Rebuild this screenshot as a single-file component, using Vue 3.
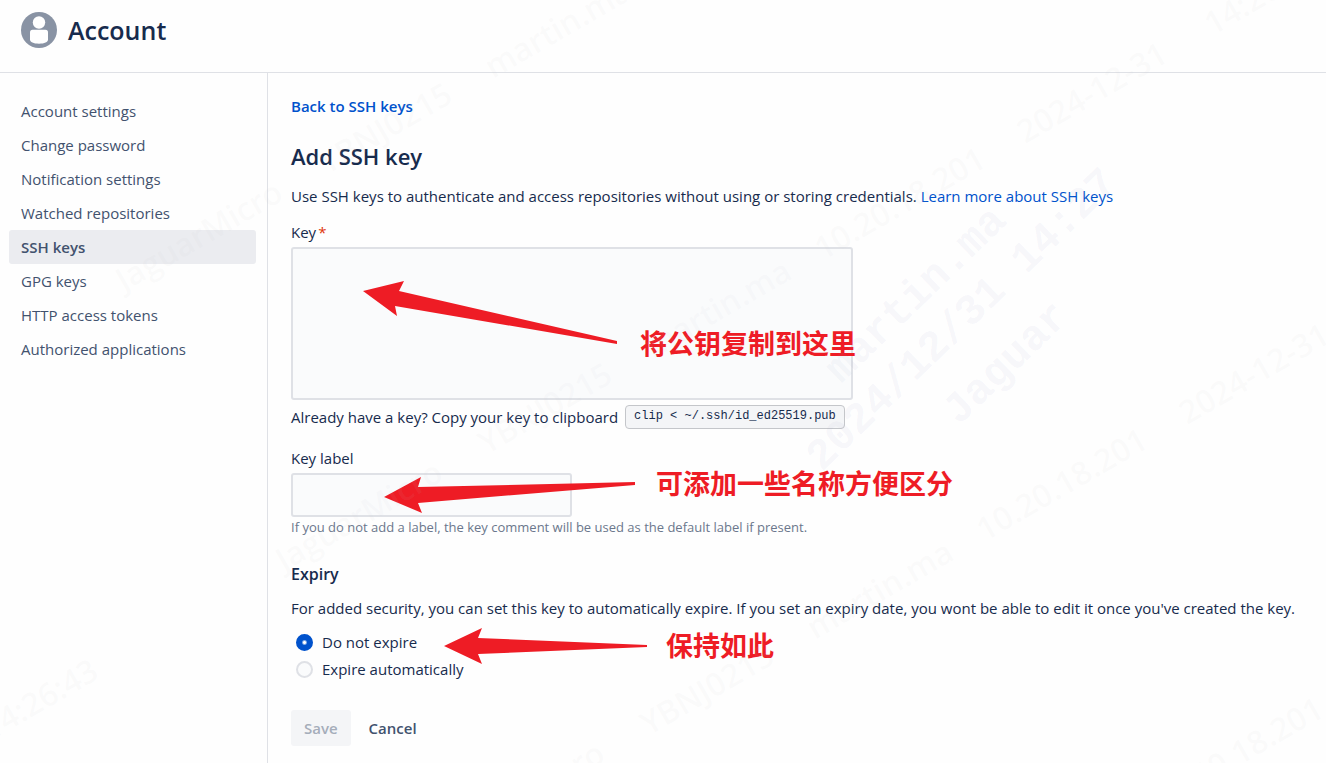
<script setup>
import { ref } from 'vue'

const navItems = [
  'Account settings',
  'Change password',
  'Notification settings',
  'Watched repositories',
  'SSH keys',
  'GPG keys',
  'HTTP access tokens',
  'Authorized applications',
]
const active = 'SSH keys'

const key = ref('')
const label = ref('')
const expiry = ref('never')

const stamp = [
  { text: 'JaguarMicro', at: 0 },
  { text: 'YBNJ0215', at: 234 },
  { text: 'martin.ma', at: 426 },
  { text: '10.20.18.201', at: 622 },
  { text: '2024-12-31', at: 856 },
  { text: '14:26:43', at: 1072 },
]
const stampRows = [
  { x: -938, y: 1277, parts: stamp.slice(5) },
  { x: 124, y: 292, parts: stamp.slice(0, 3) },
  { x: 284, y: 572, parts: stamp },
  { x: 446, y: 853, parts: stamp.slice(0, 5) },
  { x: 622, y: 1122, parts: stamp.slice(3, 4) },
]
</script>

<template>
  <div class="page">
    <header class="header">
      <svg class="avatar" viewBox="0 0 36 36" aria-hidden="true">
        <circle cx="18" cy="18" r="18" fill="#8993a4" />
        <circle cx="18" cy="10.500" r="6.200" fill="#fff" />
        <path d="M11.500 17.800h13a2.500 2.500 0 0 1 2.500 2.500V27.500c0 2.500-3.500 4.200-9 4.200S9 30 9 27.500v-7.200a2.500 2.500 0 0 1 2.500-2.500z" fill="#fff" />
      </svg>
      <h1>Account</h1>
    </header>

    <div class="body">
      <nav class="sidebar">
        <a
          v-for="item in navItems"
          :key="item"
          href="#"
          class="nav-item"
          :class="{ active: item === active }"
        >{{ item }}</a>
      </nav>

      <main class="content">
        <a href="#" class="back">Back to SSH keys</a>
        <h2>Add SSH key</h2>
        <p class="intro">
          Use SSH keys to authenticate and access repositories without using or storing credentials.
          <a href="#">Learn more about SSH keys</a>
        </p>

        <form @submit.prevent>
          <div class="field">
            <label for="key">Key<span class="required">*</span></label>
            <textarea id="key" v-model="key"></textarea>
            <div class="note note-key">
              <svg width="256" height="66" viewBox="0 0 256 66" aria-hidden="true">
                <path d="M0 11L41 1L36 11L254 61V64L32 26L34 36Z" />
              </svg>
              <span>将公钥复制到这里</span>
            </div>
          </div>
          <p class="clipboard">
            Already have a key? Copy your key to clipboard
            <code>clip &lt; ~/.ssh/id_ed25519.pub</code>
          </p>

          <div class="field field-label">
            <label for="label">Key label</label>
            <input id="label" v-model="label" type="text" />
            <div class="note note-label">
              <svg width="252" height="38" viewBox="0 0 252 38" aria-hidden="true">
                <path d="M0 21L37 1L34 11L251 6V9L34 27L38 37Z" />
              </svg>
              <span>可添加一些名称方便区分</span>
            </div>
          </div>
          <p class="hint">If you do not add a label, the key comment will be used as the default label if present.</p>

          <fieldset>
            <legend>Expiry</legend>
            <p class="expiry-text">
              For added security, you can set this key to automatically expire. If you set an expiry date, you wont be able to edit it once you've created the key.
            </p>
            <div class="radios">
              <label class="radio">
                <input v-model="expiry" type="radio" name="expiry" value="never" />
                Do not expire
              </label>
              <label class="radio">
                <input v-model="expiry" type="radio" name="expiry" value="auto" />
                Expire automatically
              </label>
              <div class="note note-expiry">
                <svg width="205" height="36" viewBox="0 0 205 36" aria-hidden="true">
                  <path d="M0 18L38 0L34 10L203 17V19L34 26L38 36Z" />
                </svg>
                <span>保持如此</span>
              </div>
            </div>
          </fieldset>

          <div class="actions">
            <button type="submit" class="save" disabled>Save</button>
            <button type="button" class="cancel">Cancel</button>
          </div>
        </form>
      </main>
    </div>

    <svg class="watermark" aria-hidden="true">
      <g class="stamp">
        <g v-for="(row, i) in stampRows" :key="i" :transform="`translate(${row.x} ${row.y}) rotate(-30)`">
          <text v-for="part in row.parts" :key="part.text" :x="part.at" y="0">{{ part.text }}</text>
        </g>
      </g>
      <g class="stamp-large">
        <text transform="translate(841 384) rotate(-44)">martin.ma</text>
        <text transform="translate(822 472) rotate(-44)">2024/12/31 14:27</text>
        <text transform="translate(959 426) rotate(-44)">Jaguar</text>
      </g>
    </svg>
  </div>
</template>

<style>
body {
  margin: 0;
  background: #fff;
}
</style>

<style scoped>
.page {
  position: relative;
  min-height: 100vh;
  display: flex;
  flex-direction: column;
  overflow: hidden;
  box-sizing: border-box;
  background: #fefefe;
  color: #172b4d;
  font: 15px/24px "Open Sans", "Noto Sans", sans-serif;
}
.page * {
  box-sizing: border-box;
}
.header {
  display: flex;
  align-items: center;
  gap: 11px;
  height: 73px;
  padding: 0 21px 12px;
  border-bottom: 1px solid #dfe1e6;
}
.avatar {
  width: 36px;
  height: 36px;
}
h1 {
  margin: 0;
  font-size: 25px;
  line-height: 32px;
  font-weight: 600;
}
.body {
  flex: 1;
  display: flex;
}
.sidebar {
  flex: 0 0 268px;
  display: flex;
  flex-direction: column;
  padding: 21px 11px 0 9px;
  border-right: 1px solid #dfe1e6;
}
.nav-item {
  padding: 5px 12px;
  border-radius: 3px;
  color: #42526e;
  text-decoration: none;
}
.nav-item.active {
  background: #ebecf0;
  font-weight: 600;
}
.content {
  flex: 1;
  min-width: 0;
  padding: 21px 23px 16px;
}
a {
  color: #0052cc;
  text-decoration: none;
}
.back {
  display: block;
  font-weight: 600;
}
h2 {
  margin: 22px 0 12px;
  font-size: 22px;
  line-height: 32px;
  font-weight: 600;
}
p {
  margin: 0;
}
.intro {
  margin-bottom: 12px;
}
.field {
  position: relative;
  display: flex;
  flex-direction: column;
  align-items: flex-start;
}
.required {
  margin-left: 2px;
  color: #de350b;
}
textarea,
input[type="text"] {
  max-width: 100%;
  margin: 3px 0 0;
  padding: 8px;
  border: 2px solid #dfe1e6;
  border-radius: 3px;
  background: #fafbfc;
  color: inherit;
  font: inherit;
  outline: none;
  resize: none;
}
textarea {
  width: 562px;
  height: 153px;
}
input[type="text"] {
  width: 281px;
  height: 44px;
}
.clipboard {
  display: flex;
  align-items: center;
  gap: 7px;
  margin-top: 5px;
}
code {
  padding: 0 8px 2px;
  border: 1px solid #c4c6ca;
  border-radius: 4px;
  background: #f4f5f7;
  font: 12px/20px "Liberation Mono", monospace;
}
.field-label {
  margin-top: 17px;
}
.hint {
  color: #6b778c;
  font-size: 13px;
  line-height: 20px;
}
fieldset {
  margin: 25px 0 0;
  padding: 0;
  border: 0;
}
legend {
  padding: 0;
  font-size: 16px;
  font-weight: 600;
}
.expiry-text {
  margin-top: 10px;
}
.radios {
  position: relative;
  display: flex;
  flex-direction: column;
  align-items: flex-start;
  gap: 3px;
  margin-top: 10px;
}
.radio {
  display: flex;
  align-items: center;
  gap: 9px;
  padding-left: 5px;
}
input[type="radio"] {
  appearance: none;
  width: 17px;
  height: 17px;
  margin: 0;
  border: 2px solid #dfe1e6;
  border-radius: 50%;
  background: #fafbfc;
}
input[type="radio"]:checked {
  border-color: #0052cc;
  background: radial-gradient(circle, #fff 1px, #0052cc 3px);
}
.actions {
  display: flex;
  margin-top: 29px;
}
button {
  height: 36px;
  border: 0;
  border-radius: 3px;
  font: 600 15px/24px "Open Sans", "Noto Sans", sans-serif;
}
.save {
  padding: 0 13px;
  background: #f4f5f7;
  color: #a5adba;
}
.cancel {
  padding: 0 18px;
  background: none;
  color: #42526e;
}
.note {
  position: absolute;
  display: flex;
  pointer-events: none;
  color: #ee1c25;
  font: 700 27px/34px "Noto Sans CJK SC", sans-serif;
  white-space: nowrap;
}
.note svg {
  flex: none;
  fill: #ee1c25;
}
.note-key {
  left: 72px;
  top: 60px;
  align-items: flex-end;
  gap: 21px;
}
.note-key span {
  margin-bottom: -14px;
}
.note-label {
  left: 93px;
  top: 30px;
  gap: 20px;
}
.note-label span {
  margin-top: -10px;
}
.note-expiry {
  left: 153px;
  top: -2px;
  gap: 17px;
}
.watermark {
  position: absolute;
  inset: 0;
  width: 100%;
  height: 100%;
  pointer-events: none;
}
.stamp {
  fill: rgba(200, 200, 205, 0.07);
  font: 600 32px "Open Sans", sans-serif;
}
.stamp-large {
  fill: rgba(150, 155, 190, 0.08);
  font: 700 43px "Liberation Mono", monospace;
}
</style>
